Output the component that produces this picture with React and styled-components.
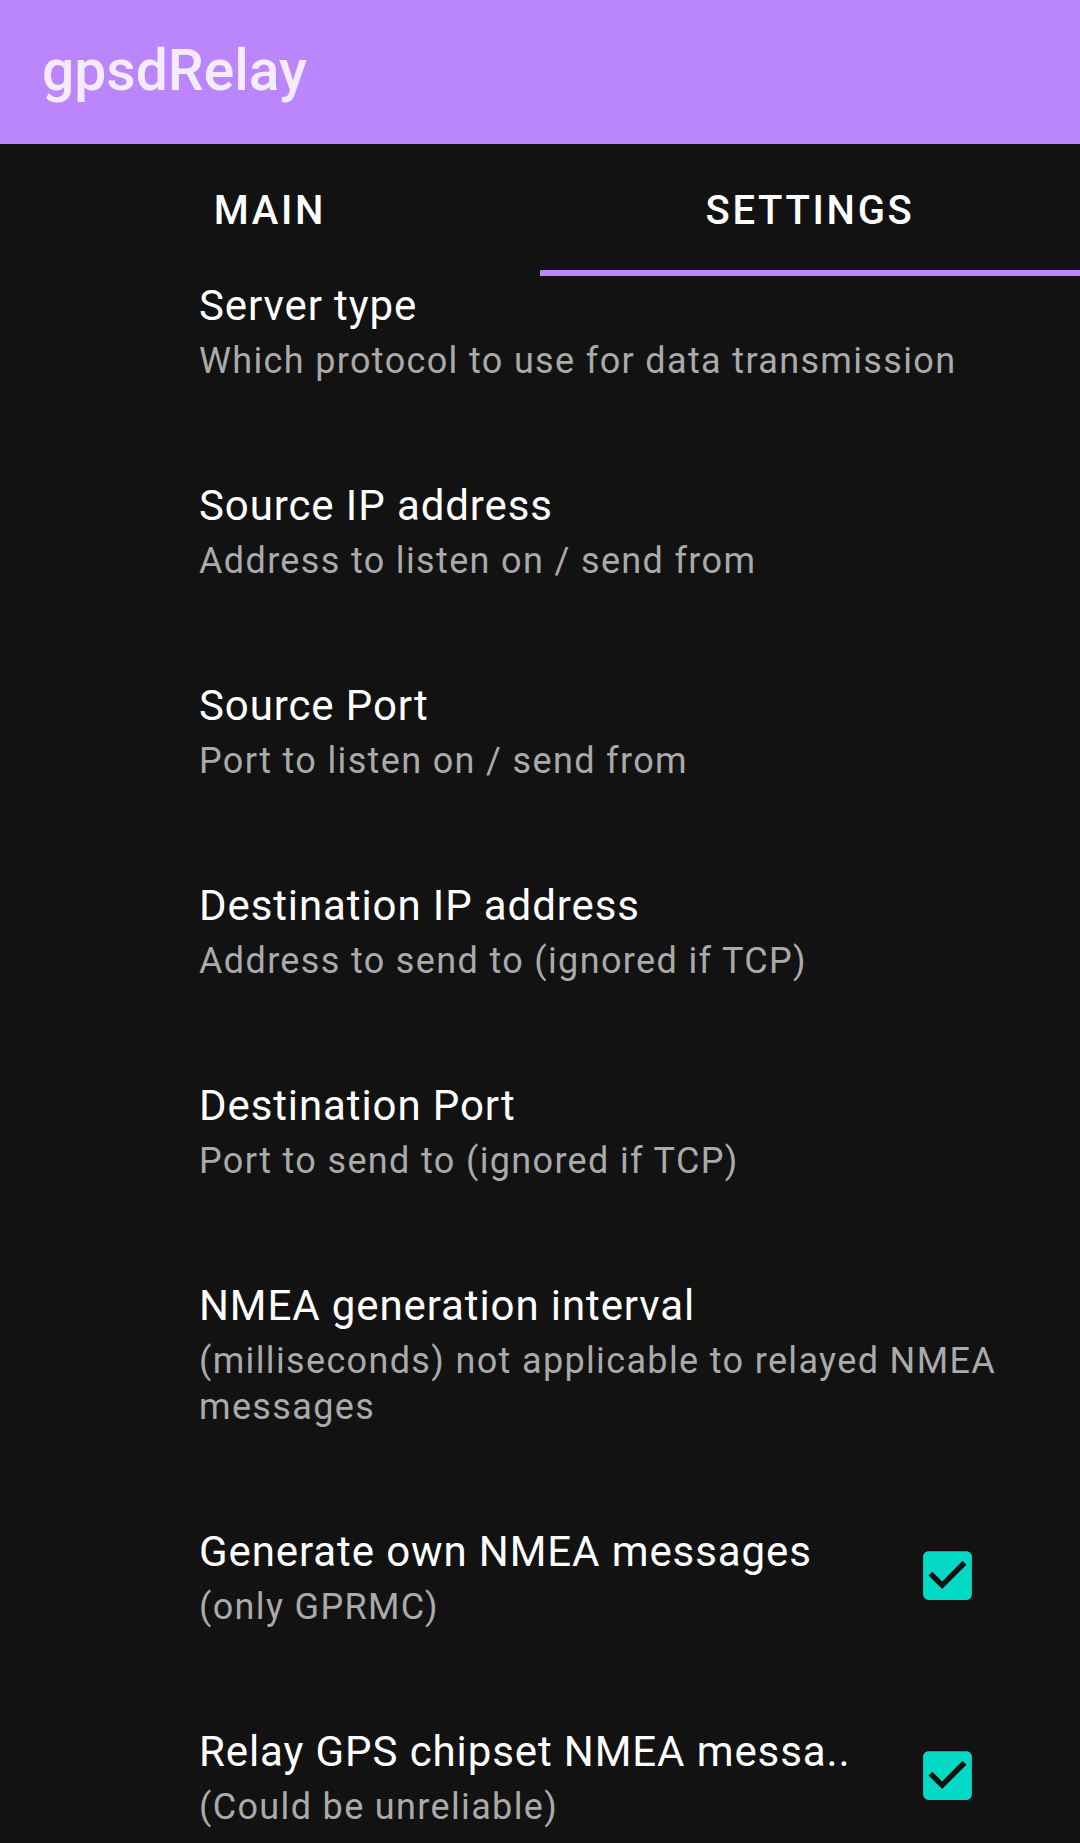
import React from 'react'
import styled, { createGlobalStyle } from 'styled-components'

const GlobalStyle = createGlobalStyle`
  body {
    margin: 0;
    background: #121212;
    font-family: Roboto, "Noto Sans", sans-serif;
  }
`

const prefs = [
  { title: 'Server type', summary: 'Which protocol to use for data transmission' },
  { title: 'Source IP address', summary: 'Address to listen on / send from' },
  { title: 'Source Port', summary: 'Port to listen on / send from' },
  { title: 'Destination IP address', summary: 'Address to send to (ignored if TCP)' },
  { title: 'Destination Port', summary: 'Port to send to (ignored if TCP)' },
  { title: 'NMEA generation interval', summary: '(milliseconds) not applicable to relayed NMEA messages' },
  { title: 'Generate own NMEA messages', summary: '(only GPRMC)', checked: true },
  { title: 'Relay GPS chipset NMEA messa..', summary: '(Could be unreliable)', checked: true },
]

function CheckBoxIcon() {
  return (
    <CheckIcon viewBox="0 0 24 24">
      <path
        fill="#03dac5"
        d="M19 3H5c-1.11 0-2 .9-2 2v14c0 1.1.89 2 2 2h14c1.11 0 2-.9 2-2V5c0-1.1-.89-2-2-2z"
      />
      <path fill="#121212" d="M10 17l-5-5 1.41-1.41L10 14.17l7.59-7.59L19 8l-9 9z" />
    </CheckIcon>
  )
}

export default function App() {
  return (
    <Page>
      <GlobalStyle />
      <AppBar>
        <AppTitle>gpsdRelay</AppTitle>
      </AppBar>
      <TabBar>
        <Tab>Main</Tab>
        <Tab active>Settings</Tab>
      </TabBar>
      <Content>
        <PrefList>
          {prefs.map(p => (
            <PrefRow key={p.title} hasWidget={!!p.checked}>
              <PrefText>
                <PrefTitle>{p.title}</PrefTitle>
                <PrefSummary>{p.summary}</PrefSummary>
              </PrefText>
              {p.checked && <CheckBoxIcon />}
            </PrefRow>
          ))}
        </PrefList>
      </Content>
    </Page>
  )
}

const Page = styled.div`
  width: 1080px;
  height: 1843px;
  overflow: hidden;
  background: #121212;
  display: flex;
  flex-direction: column;
`

const AppBar = styled.div`
  height: 144px;
  flex-shrink: 0;
  background: #bb86fc;
  display: flex;
  align-items: center;
  padding-left: 42px;
`

const AppTitle = styled.h1`
  margin: 0 0 3px;
  font-size: 57px;
  font-weight: 500;
  color: #f4ebfe;
  letter-spacing: 0;
`

const TabBar = styled.div`
  height: 132px;
  flex-shrink: 0;
  display: flex;
  background: #121212;
`

const Tab = styled.div`
  flex: 1;
  display: flex;
  align-items: center;
  justify-content: center;
  text-transform: uppercase;
  font-size: 40px;
  font-weight: 500;
  letter-spacing: 2.7px;
  color: #ffffff;
  box-shadow: ${p => (p.active ? 'inset 0 -6px 0 #bb86fc' : 'none')};
`

const Content = styled.div`
  flex: 1;
  overflow: hidden;
`

// list is scrolled a little, first row's top padding sits under the tabs
const PrefList = styled.div`
  margin-top: -43px;
`

const PrefRow = styled.div`
  display: flex;
  align-items: center;
  padding: 48px ${p => (p.hasWidget ? '100px' : '44px')} 49px 199px;
`

const PrefText = styled.div`
  flex: 1;
  min-width: 0;
`

const PrefTitle = styled.div`
  font-size: 42px;
  line-height: 50px;
  letter-spacing: 0.9px;
  color: #ffffff;
  margin-bottom: 7px;
  white-space: nowrap;
  overflow: hidden;
`

const PrefSummary = styled.div`
  font-size: 36px;
  line-height: 46px;
  letter-spacing: 1.35px;
  color: #aaaaaa;
`

const CheckIcon = styled.svg`
  width: 65px;
  height: 65px;
  flex-shrink: 0;
  margin-top: -7px;
`
